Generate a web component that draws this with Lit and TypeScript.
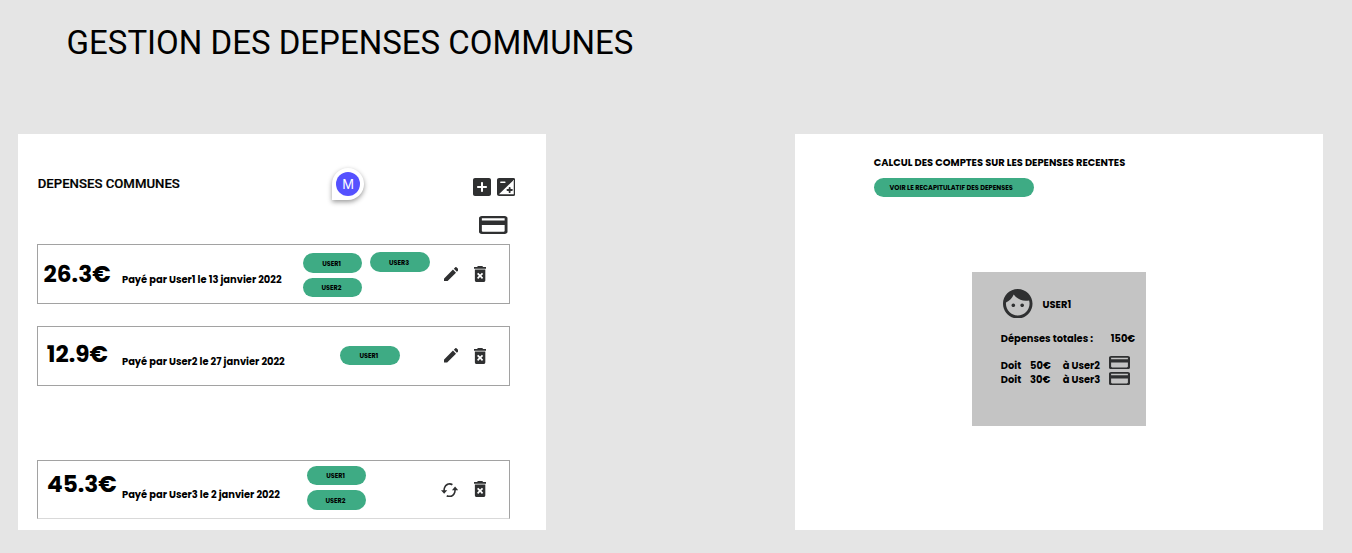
import { LitElement, html, svg, css } from "lit";
import { customElement, property } from "lit/decorators.js";

const PATHS = {
  edit: { box: "3 3 18 18", d: "M3 17.46v3.04c0 .28.22.5.5.5h3.04c.13 0 .26-.05.35-.15L17.81 9.94l-3.75-3.75L3.15 17.1c-.1.1-.15.22-.15.36zM20.71 7.04a.996.996 0 0 0 0-1.41l-2.34-2.34a.996.996 0 0 0-1.41 0l-1.83 1.83 3.75 3.75 1.83-1.83z" },
  trash: { box: "5 3 14 18", d: "M6 19c0 1.1.9 2 2 2h8c1.1 0 2-.9 2-2V7H6v12zm2.46-7.12l1.41-1.41L12 12.59l2.12-2.12 1.41 1.41L13.41 14l2.12 2.12-1.41 1.41L12 15.41l-2.12 2.12-1.41-1.41L10.59 14l-2.13-2.12zM15.5 4l-1-1h-5l-1 1H5v2h14V4z" },
  cached: { box: "1 4 22 16", d: "M19 8l-4 4h3c0 3.31-2.69 6-6 6-1.01 0-1.97-.25-2.8-.7l-1.46 1.46C8.97 19.54 10.43 20 12 20c4.42 0 8-3.58 8-8h3l-4-4zM6 12c0-3.31 2.69-6 6-6 1.01 0 1.97.25 2.8.7l1.46-1.46C15.03 4.46 13.57 4 12 4c-4.42 0-8 3.58-8 8H1l4 4 4-4H6z" },
  add: { box: "3 3 18 18", d: "M19 3H5c-1.11 0-2 .9-2 2v14c0 1.1.89 2 2 2h14c1.1 0 2-.9 2-2V5c0-1.1-.9-2-2-2zm-3 10h-3v3c0 .55-.45 1-1 1s-1-.45-1-1v-3H8c-.55 0-1-.45-1-1s.45-1 1-1h3V8c0-.55.45-1 1-1s1 .45 1 1v3h3c.55 0 1 .45 1 1s-.45 1-1 1z" },
  exposure: { box: "3 3 18 18", d: "M19 3H5c-1.1 0-2 .9-2 2v14c0 1.1.9 2 2 2h14c1.1 0 2-.9 2-2V5c0-1.1-.9-2-2-2zM6.7 6.6h4c.4 0 .7.3.7.7s-.3.7-.7.7h-4c-.4 0-.7-.3-.7-.7s.3-.7.7-.7zM19.3 19.3H4.9L19.3 4.9v14.4zM14.4 15.9v1.3c0 .5.4.9.9.9s.9-.4.9-.9v-1.300h1.300c.5 0 .9-.4.9-.9s-.4-.9-.9-.9h-1.300v-1.300c0-.5-.4-.9-.9-.9s-.9.4-.9.9v1.300h-1.300c-.5 0-.9.4-.9.9s.4.9.9.9z" },
  card: { box: "2 4 20 16", d: "M20 4H4c-1.11 0-1.99.89-1.99 2L2 18c0 1.11.89 2 2 2h16c1.11 0 2-.89 2-2V6c0-1.11-.89-2-2-2zm-1 14H5c-.55 0-1-.45-1-1v-5h16v5c0 .55-.45 1-1 1zm1-10H4V6h16v2z" },
  face: { box: "2 2 20 20", d: "M9 11.75c-.69 0-1.25.56-1.25 1.25s.56 1.25 1.25 1.25 1.25-.56 1.25-1.25-.56-1.25-1.25-1.25zm6 0c-.69 0-1.25.56-1.25 1.25s.56 1.25 1.25 1.25 1.25-.56 1.25-1.25-.56-1.25-1.25-1.25zM12 2C6.48 2 2 6.48 2 12s4.48 10 10 10 10-4.48 10-10S17.52 2 12 2zm0 18c-4.41 0-8-3.59-8-8 0-.29.02-.58.05-.86 2.36-1.05 4.23-2.98 5.21-5.37C11.07 8.33 14.05 10 17.42 10c.78 0 1.53-.09 2.25-.26.21.71.33 1.47.33 2.26 0 4.41-3.59 8-8 8z" },
};
type IconName = keyof typeof PATHS;

const icon = (name: IconName) => html`<svg class="icon ${name}" viewBox=${PATHS[name].box} preserveAspectRatio="none">
  ${svg`<path fill-rule="evenodd" d=${PATHS[name].d}></path>`}
</svg>`;

const shared = css`
  .icon { display: block; fill: #2f3031; flex: none; }
  .line { flex: none; white-space: nowrap; font-family: "Poppins", "Inter", sans-serif; font-weight: 700; color: #000; font-size: 9.88px; line-height: 7px; }
`;

interface Expense {
  kind: string;
  amount: string;
  label: string;
  users: string[];
  action: IconName;
}

const EXPENSES: Expense[] = [
  { kind: "first", amount: "26.3€", label: "Payé par User1 le 13 janvier 2022", users: ["USER1", "USER3", "USER2"], action: "edit" },
  { kind: "second", amount: "12.9€", label: "Payé par User2 le 27 janvier 2022", users: ["USER1"], action: "edit" },
  { kind: "third", amount: "45.3€", label: "Payé par User3 le 2 janvier 2022", users: ["USER1", "USER2"], action: "cached" },
];

@customElement("expense-row")
class ExpenseRow extends LitElement {
  @property({ attribute: false }) expense!: Expense;

  static styles = [shared, css`
    :host { display: block; }
    .row {
      box-sizing: border-box; width: 473px; height: 60px; border: 1px solid #a2a2a2;
      display: grid; grid-template-columns: 84px 181px 140.7px 29.6px 1fr; align-items: start;
    }
    .amount { font-size: 23.2px; line-height: 17px; margin: 21px 0 0 5.6px; }
    .label { margin-top: 31px; }
    .tags { display: grid; grid-template-columns: 59.5px 59.5px; column-gap: 8px; row-gap: 5px; margin-top: 8px; }
    .tag { height: 19.5px; border-radius: 10px; background: #3eab84; display: flex; align-items: center; justify-content: center; }
    .name { font-size: 6.5px; line-height: 5px; margin-right: 2.4px; }
    .tag:nth-child(2) { margin-top: -1px; margin-bottom: 1px; }
    .edit { width: 14.6px; height: 14.6px; margin-top: 21.3px; }
    .trash { width: 12.2px; height: 16px; margin: 20.7px 0 0 .3px; }
    .cached { width: 17.2px; height: 14.4px; margin: 21.7px 0 0 -2.5px; }
    .second .amount { margin: 18.5px 0 0 8.8px; }
    .second .tags { margin: 18.5px 0 0 37.3px; }
    .second .edit { margin-top: 20.7px; }
    .second .trash { margin-top: 20.3px; }
    .third { height: 59px; border-bottom-color: #d9d9d9; }
    .third .amount { margin: 15px 0 0 9px; }
    .third .label { margin-top: 30px; }
    .third .tags { grid-template-columns: 59.5px; margin: 4.5px 0 0 4px; }
    .third .tag:nth-child(2) { margin: 0; }
    .third .trash { margin-top: 20px; }
  `];

  render() {
    const e = this.expense;
    return html`<div class="row ${e.kind}">
      <div class="line amount">${e.amount}</div>
      <div class="line label">${e.label}</div>
      <div class="tags">${e.users.map((u) => html`<div class="tag"><span class="line name">${u}</span></div>`)}</div>
      ${icon(e.action)}
      ${icon("trash")}
    </div>`;
  }
}

@customElement("app-root")
class AppRoot extends LitElement {
  static styles = [shared, css`
    :host { display: block; height: 553px; background: #e5e5e5; overflow: hidden; font-family: "Roboto", sans-serif; color: #000; }
    .title { box-sizing: border-box; margin: 0; padding: 23px 0 0 66.6px; height: 134px; font-weight: 400; font-size: 33px; line-height: 40px; white-space: nowrap; }
    .boards { display: flex; gap: 249.5px; padding-left: 18.3px; }
    .board { box-sizing: border-box; width: 527.7px; height: 395.7px; margin-top: .3px; background: #fff; flex: none; }
    .expenses { padding-left: 18.7px; }
    .bar { display: flex; height: 110px; align-items: flex-start; }
    .heading { margin: 42px 0 0 .7px; width: 294.5px; font-size: 13.2px; line-height: 16px; font-weight: 500; -webkit-text-stroke: .2px #000; }
    .bubble {
      width: 32px; height: 32px; margin-top: 33.7px; box-sizing: border-box; padding: 4px; background: #fff;
      border-radius: 16px 16px 16px 0; box-shadow: 0 2px 5px rgba(0,0,0,.4);
    }
    .avatar { width: 24px; height: 24px; border-radius: 50%; background: #5551ff; color: #fff; font: 400 13px/24px "Inter", sans-serif; text-align: center; }
    .tools { display: grid; grid-template-columns: 18px 18.5px; column-gap: 6px; row-gap: 20px; margin: 43.5px 0 0 108.6px; }
    .add { width: 18px; height: 18px; }
    .exposure { width: 18.5px; height: 18px; }
    .tools .card { width: 28.5px; height: 18px; margin-left: 6.7px; grid-column: span 2; }
    .second-row { margin-top: 22px; }
    .third-row { margin-top: 74px; }
    .summary { padding: 24.7px 0 0 78.3px; }
    .recap { width: 160px; height: 19.5px; margin-top: 12px; box-sizing: border-box; padding-left: 15.7px; border-radius: 10px; background: #3eab84; display: flex; align-items: center; }
    .recap-text { font-size: 6.6px; line-height: 5px; }
    .debtor { width: 173.7px; height: 153.5px; margin: 74.9px 0 0 98.5px; background: #c4c4c4; box-sizing: border-box; padding: 16.3px 0 0 28.5px; }
    .who { display: flex; align-items: center; gap: 10px; padding-left: 2.3px; }
    .who .line { margin-top: 3px; }
    .face { width: 29.5px; height: 29.5px; }
    .total { display: grid; grid-template-columns: 110px auto; margin-top: 17px; }
    .debts { display: grid; grid-template-columns: 29.3px 32.7px 46px 21px; row-gap: 3px; margin-top: 13.7px; }
    .debts .line { margin-top: 6px; }
    .debts .card { width: 21px; height: 13px; }
    .debts .line.later { margin-top: 4px; }
  `];

  render() {
    const [first, second, third] = EXPENSES;
    return html`
      <h1 class="title">GESTION DES DEPENSES COMMUNES</h1>
      <main class="boards">
        <section class="board expenses">
          <header class="bar">
            <div class="heading">DEPENSES COMMUNES</div>
            <div class="bubble"><div class="avatar">M</div></div>
            <div class="tools">${icon("add")}${icon("exposure")}${icon("card")}</div>
          </header>
          <expense-row .expense=${first}></expense-row>
          <expense-row class="second-row" .expense=${second}></expense-row>
          <expense-row class="third-row" .expense=${third}></expense-row>
        </section>
        <section class="board summary">
          <div class="line">CALCUL DES COMPTES SUR LES DEPENSES RECENTES</div>
          <div class="recap"><span class="line recap-text">VOIR LE RECAPITULATIF DES DEPENSES</span></div>
          <div class="debtor">
            <div class="who">${icon("face")}<div class="line">USER1</div></div>
            <div class="total"><div class="line">Dépenses totales :</div><div class="line">150€</div></div>
            <div class="debts">
              <div class="line">Doit</div><div class="line">50€</div><div class="line">à User2</div>${icon("card")}
              <div class="line later">Doit</div><div class="line later">30€</div><div class="line later">à User3</div>${icon("card")}
            </div>
          </div>
        </section>
      </main>
    `;
  }
}
